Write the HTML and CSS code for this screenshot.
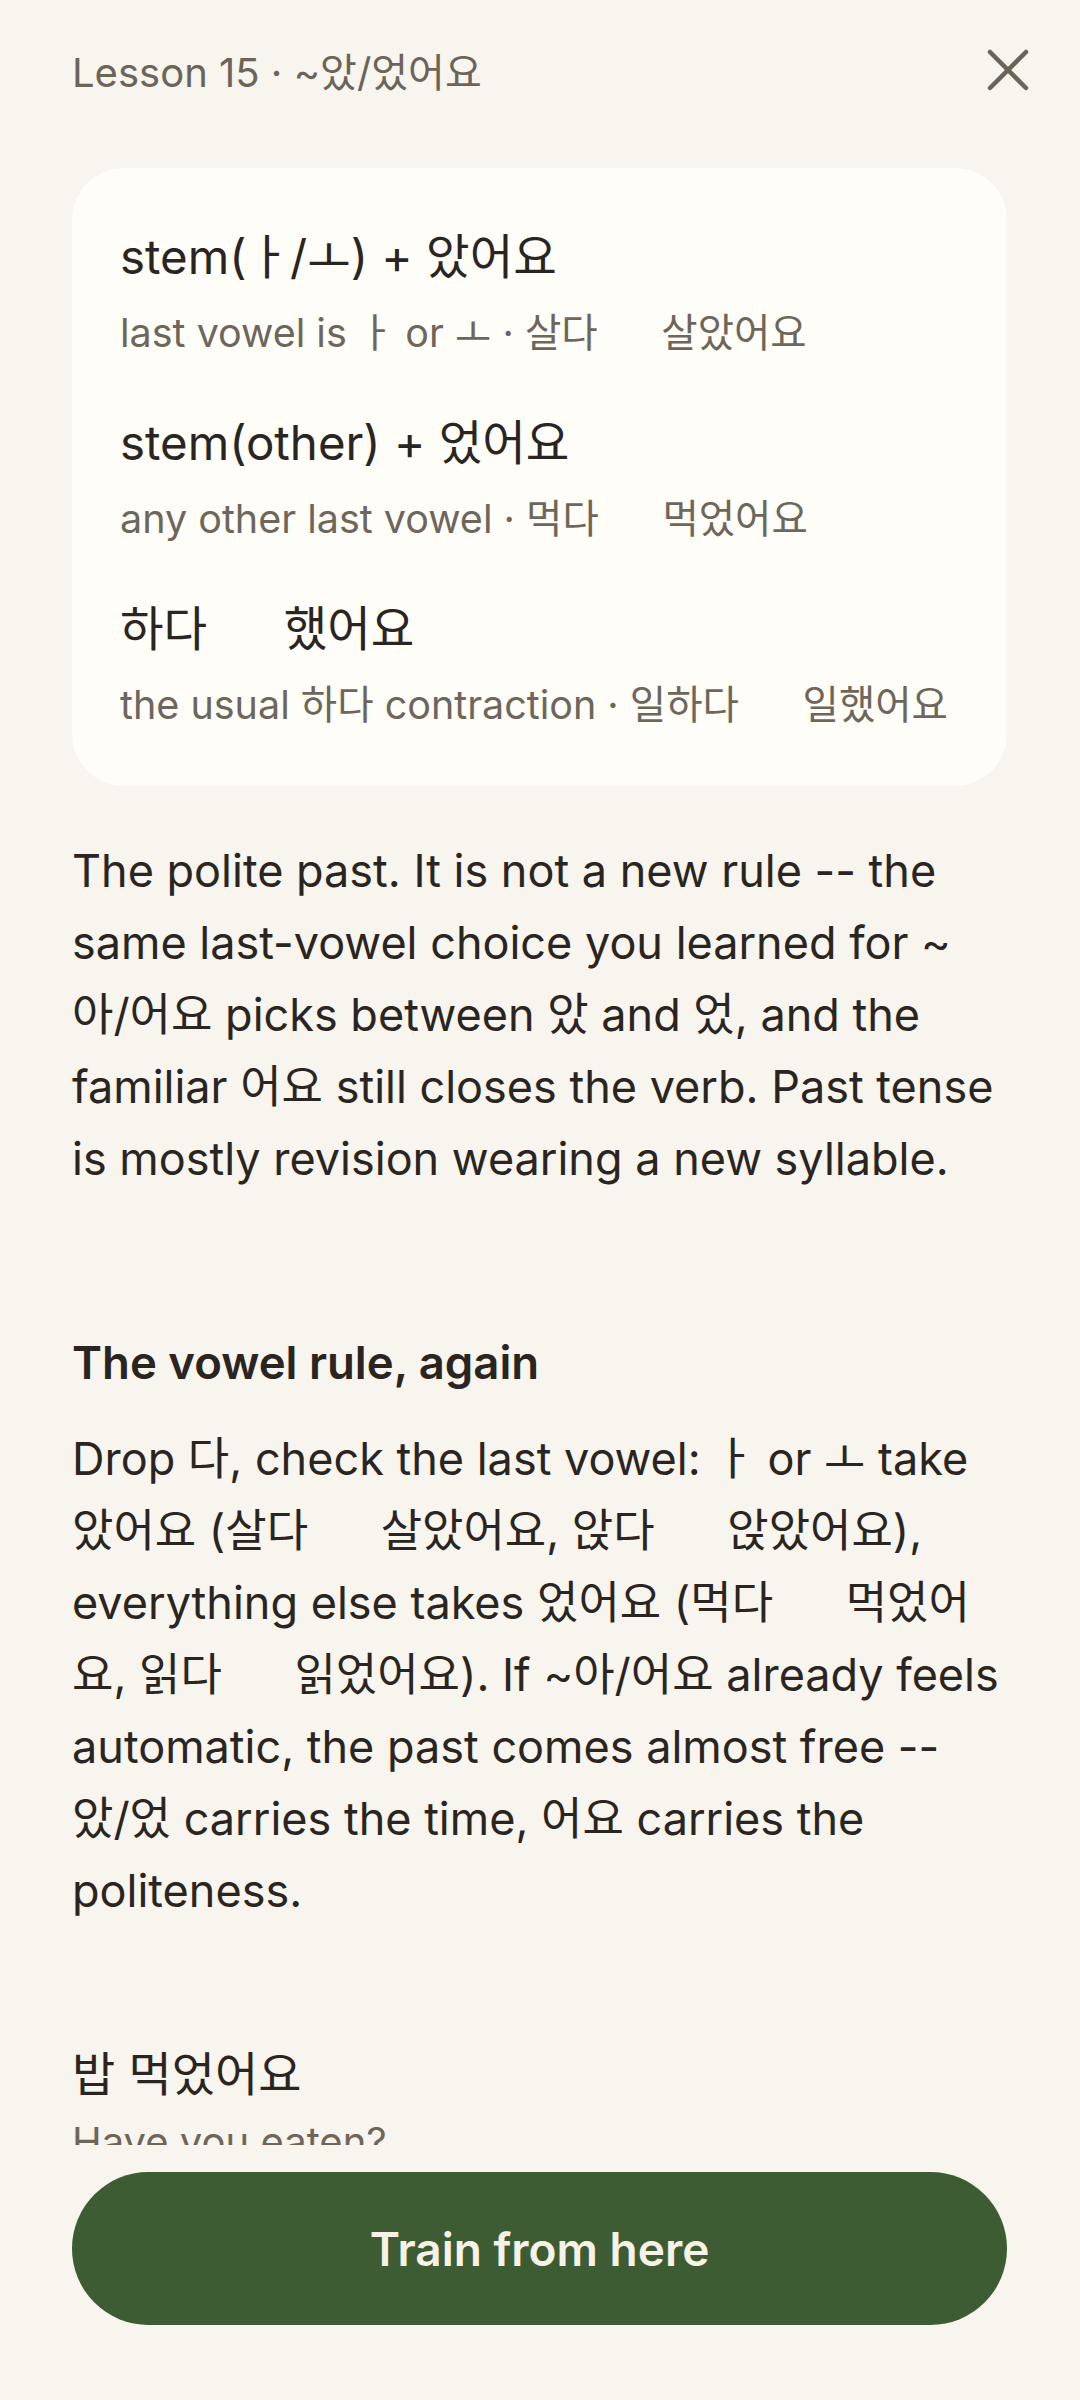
FILE: index.html
```html
<!DOCTYPE html>
<html lang="en">
<head>
<meta charset="utf-8">
<title>Lesson 15</title>
<link rel="stylesheet" href="styles.css">
</head>
<body>
<div class="screen">
  <header class="topbar">
    <div class="lesson-title">Lesson 15 · ~았/었어요</div>
    <button class="close" aria-label="Close">
      <svg viewBox="0 0 44 44" width="44" height="44"><path d="M4 4 L40 40 M40 4 L4 40" stroke="#6b6458" stroke-width="4.5" stroke-linecap="round" fill="none"/></svg>
    </button>
  </header>
  <main class="scroll">
    <section class="card">
      <div class="rule">
        <div class="rule-title">stem(ㅏ/ㅗ) + 았어요</div>
        <div class="rule-sub">last vowel is ㅏ or ㅗ · 살다 <span class="gap"></span> 살았어요</div>
      </div>
      <div class="rule">
        <div class="rule-title">stem(other) + 었어요</div>
        <div class="rule-sub">any other last vowel · 먹다 <span class="gap"></span> 먹었어요</div>
      </div>
      <div class="rule">
        <div class="rule-title">하다 <span class="gap"></span> 했어요</div>
        <div class="rule-sub">the usual 하다 contraction · 일하다 <span class="gap"></span> 일했어요</div>
      </div>
    </section>
    <p class="body intro">The polite past. It is not a new rule -- the same last-vowel choice you learned for ~아/어요 picks between 았 and 었, and the familiar 어요 still closes the verb. Past tense is mostly revision wearing a new syllable.</p>
    <h2 class="section-head">The vowel rule, again</h2>
    <p class="body">Drop 다, check the last vowel: ㅏ or ㅗ take 았어요 (살다 <span class="gap"></span> 살았어요, 앉다 <span class="gap"></span> 앉았어요), everything else takes 었어요 (먹다 <span class="gap"></span> 먹었어요, 읽다 <span class="gap"></span> 읽었어요). If ~아/어요 already feels automatic, the past comes almost free -- 았/었 carries the time, 어요 carries the politeness.</p>
    <div class="example">
      <div class="ex-ko">밥 먹었어요</div>
      <div class="ex-en">Have you eaten?</div>
    </div>
  </main>
  <footer class="bottom">
    <button class="train">Train from here</button>
  </footer>
</div>
</body>
</html>
```
FILE: styles.css
```css
html, body {
  margin: 0;
  padding: 0;
  background: #f8f4ee;
}
body {
  font-family: "Inter", "Noto Sans CJK KR", sans-serif;
  color: #2a2520;
}
.screen {
  width: 1080px;
  height: 2400px;
  display: flex;
  flex-direction: column;
  overflow: hidden;
}
.topbar {
  height: 140px;
  padding: 0 50px 0 72px;
  display: flex;
  align-items: center;
  justify-content: space-between;
  flex: none;
}
.lesson-title {
  font-size: 40px;
  color: #6b6458;
}
.close {
  background: none;
  border: 0;
  padding: 0;
  width: 44px;
  height: 44px;
  display: flex;
}
.scroll {
  flex: 1;
  overflow: hidden;
  padding: 28px 73px 0 72px;
  min-height: 0;
}
.card {
  background: #fefdf8;
  border-radius: 52px;
  padding: 54px 48px;
  display: flex;
  flex-direction: column;
  gap: 48px;
}
.rule {
  display: flex;
  flex-direction: column;
  gap: 15px;
}
.rule-title {
  font-size: 47.4px;
  line-height: 69px;
  color: #2a2520;
}
.rule-sub {
  font-size: 39.5px;
  line-height: 54px;
  color: #6e665b;
}
.gap {
  display: inline-block;
  width: 1.05em;
}
.body {
  font-size: 45px;
  line-height: 72px;
  margin: 49px 0 0;
}
.section-head {
  font-size: 45.5px;
  font-weight: 600;
  line-height: 60px;
  margin: 138px 0 0;
}
.section-head + .body {
  margin-top: 30px;
}
.example {
  margin-top: 115px;
}
.ex-ko {
  font-size: 47px;
  line-height: 64px;
}
.ex-en {
  font-size: 40px;
  line-height: 56px;
  color: #6e665b;
  margin-top: 8px;
}
.bottom {
  flex: none;
  padding: 27px 73px 75px 72px;
}
.train {
  width: 100%;
  height: 153px;
  border: 0;
  border-radius: 77px;
  background: #3e5c34;
  color: #f7f2e7;
  font-family: "Inter", sans-serif;
  font-size: 46px;
  font-weight: 600;
}
```
